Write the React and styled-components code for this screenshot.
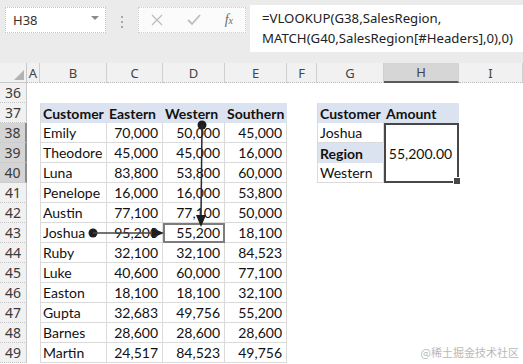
import React from 'react';
import styled, { createGlobalStyle } from 'styled-components';

const GlobalStyle = createGlobalStyle`
    html, body {
        margin: 0;
        padding: 0;
        background: #ffffff;
        overflow: hidden;
    }
`;

const Page = styled.div`
    position: relative;
    width: 523px;
    height: 364px;
    overflow: hidden;
    background: #ffffff;
    font-family: 'Lato', 'Liberation Sans', sans-serif;
`;

const TopBar = styled.div`
    display: flex;
    align-items: flex-start;
    height: 63px;
    background: #ebebeb;
    box-sizing: border-box;
    padding: 5px 0 0 5px;
`;

const NameBox = styled.div`
    display: flex;
    align-items: center;
    justify-content: space-between;
    width: 101px;
    height: 26px;
    margin-top: 2px;
    box-sizing: border-box;
    padding: 0 6px 0 7px;
    background: #ffffff;
    border: 1px dotted #c4c4c4;
    font-family: 'Noto Sans', sans-serif;
    font-size: 13px;
    color: #333;
`;

const DropArrow = styled.span`
    width: 0;
    height: 0;
    border-left: 4px solid transparent;
    border-right: 4px solid transparent;
    border-top: 4px solid #8a8a8a;
    margin-top: -4px;
`;

const Grip = styled.div`
    display: flex;
    flex-direction: column;
    gap: 3px;
    width: 32px;
    align-items: center;
    padding-top: 11px;
    & span {
        width: 2px;
        height: 2px;
        background: #a8a8a8;
    }
`;

const Buttons = styled.div`
    display: flex;
    align-items: center;
    justify-content: space-around;
    width: 108px;
    height: 26px;
    margin-top: 2px;
    box-sizing: border-box;
    background: #fbfbfb;
    border: 1px dotted #cfcfcf;
`;

const Fx = styled.span`
    font-family: 'Liberation Serif', serif;
    font-style: italic;
    font-size: 14px;
    color: #6a6a6a;
    & small {
        font-size: 10px;
    }
`;

const Formula = styled.div`
    flex: 1;
    height: 47px;
    margin-left: 4px;
    box-sizing: border-box;
    padding: 3px 0 0 12px;
    background: #ffffff;
    font-family: 'Noto Sans', sans-serif;
    font-size: 13.2px;
    line-height: 20px;
    color: #222;
    white-space: nowrap;
`;

const Sheet = styled.div`
    display: grid;
    grid-template-columns: 27px 13px 67px 56px 62px 62px 30px 67px 75px 64px;
    grid-auto-rows: 20px;
`;

const Corner = styled.div`
    position: relative;
    background: #f1f1f1;
    border-bottom: 1px solid #c8c8c8;
    border-right: 1px solid #c8c8c8;
    box-sizing: border-box;
    &::after {
        content: '';
        position: absolute;
        right: 2px;
        bottom: 2px;
        width: 0;
        height: 0;
        border-left: 10px solid transparent;
        border-bottom: 10px solid #b3b3b3;
    }
`;

const ColHead = styled.div`
    display: flex;
    align-items: center;
    justify-content: center;
    box-sizing: border-box;
    background: ${p => (p.$active ? '#d6d6d6' : '#f1f1f1')};
    border-right: 1px solid #d0d0d0;
    border-bottom: ${p => (p.$active ? '2px solid #5a5a5a' : '1px dotted #bdbdbd')};
    font-family: 'Noto Sans', sans-serif;
    font-size: 13px;
    color: #444;
`;

const RowHead = styled.div`
    display: flex;
    align-items: center;
    justify-content: center;
    box-sizing: border-box;
    background: ${p => (p.$active ? '#d4d4d4' : '#f1f1f1')};
    border-right: ${p => (p.$active ? '2px solid #8c8c8c' : '1px solid #c8c8c8')};
    border-bottom: 1px dotted #c4c4c4;
    font-family: 'Noto Sans', sans-serif;
    font-size: 14px;
    color: #3a3a3a;
`;

const Cell = styled.div`
    display: flex;
    align-items: center;
    justify-content: ${p => (p.$right ? 'flex-end' : p.$center ? 'center' : 'flex-start')};
    box-sizing: border-box;
    padding: 0 4px 0 2px;
    font-size: 14px;
    font-weight: ${p => (p.$bold ? 700 : 400)};
    color: #111;
    white-space: nowrap;
    overflow: visible;
    background: ${p => (p.$head ? '#dce3f0' : '#ffffff')};
    border-right: ${p => (p.$grid ? '1px solid #dadada' : 'none')};
    border-bottom: ${p => (p.$grid ? '1px solid #dadada' : 'none')};
    border-left: ${p => (p.$left ? '1px solid #dadada' : 'none')};
    ${p => p.$outline && 'outline: 2px solid #7d7d7d; outline-offset: -2px;'}
`;

const Merged = styled(Cell)`
    position: relative;
    grid-row: span 3;
    justify-content: center;
    border: 2px solid #474747;
    &::after {
        content: '';
        position: absolute;
        right: -4px;
        bottom: -4px;
        width: 6px;
        height: 6px;
        background: #474747;
        border: 1px solid #ffffff;
    }
`;

const Overlay = styled.svg`
    position: absolute;
    left: 0;
    top: 0;
    pointer-events: none;
`;

const Watermark = styled.div`
    position: absolute;
    right: 4px;
    bottom: 4px;
    font-family: 'Noto Sans CJK SC', sans-serif;
    font-size: 11px;
    color: #b9b9b9;
`;

const columns = ['A', 'B', 'C', 'D', 'E', 'F', 'G', 'H', 'I'];

const sales = [
    ['Emily', '70,000', '50,000', '45,000'],
    ['Theodore', '45,000', '45,000', '16,000'],
    ['Luna', '83,800', '53,800', '60,000'],
    ['Penelope', '16,000', '16,000', '53,800'],
    ['Austin', '77,100', '77,100', '50,000'],
    ['Joshua', '95,200', '55,200', '18,100'],
    ['Ruby', '32,100', '32,100', '84,523'],
    ['Luke', '40,600', '60,000', '77,100'],
    ['Easton', '18,100', '18,100', '32,100'],
    ['Gupta', '32,683', '49,756', '55,200'],
    ['Barnes', '28,600', '28,600', '28,600'],
    ['Martin', '24,517', '84,523', '49,756'],
];

const lookup = {
    37: { text: 'Customer', head: true, bold: true },
    38: { text: 'Joshua' },
    39: { text: 'Region', head: true, bold: true },
    40: { text: 'Western' },
};

const SalesCells = ({ row }) => {
    if (row === 37) {
        return ['Customer', 'Eastern', 'Western', 'Southern'].map((t, i) => (
            <Cell key={t} $head $bold $left={i === 0}>{t}</Cell>
        ));
    }
    const data = sales[row - 38];
    if (!data) {
        return [0, 1, 2, 3].map(i => <Cell key={i} />);
    }
    return data.map((t, i) => (
        <Cell key={i} $grid $left={i === 0} $right={i > 0} $outline={row === 43 && i === 2}>
            {t}
        </Cell>
    ));
};

const LookupCells = ({ row }) => {
    const g = lookup[row];
    if (!g) return [<Cell key="g" />, <Cell key="h" />];
    const gCell = (
        <Cell key="g" $head={g.head} $bold={g.bold} $grid={!g.head} $left>{g.text}</Cell>
    );
    if (row === 37) return [gCell, <Cell key="h" $head $bold>Amount</Cell>];
    if (row === 38) return [gCell, <Merged key="h">55,200.00</Merged>];
    return [gCell];
};

const SheetRow = ({ row }) => (
    <>
        <RowHead $active={row >= 38 && row <= 40}>{row}</RowHead>
        <Cell />
        <SalesCells row={row} />
        <Cell />
        <LookupCells row={row} />
        <Cell />
    </>
);

const rows = Array.from({ length: 14 }, (_, i) => 36 + i);

export default function App() {
    return (
        <Page>
            <GlobalStyle />
            <TopBar>
                <NameBox>
                    H38
                    <DropArrow />
                </NameBox>
                <Grip>
                    <span />
                    <span />
                    <span />
                </Grip>
                <Buttons>
                    <svg width="12" height="12" viewBox="0 0 12 12">
                        <path d="M1 1 L11 11 M11 1 L1 11" stroke="#bdbdbd" strokeWidth="1.3" />
                    </svg>
                    <svg width="14" height="12" viewBox="0 0 14 12">
                        <path d="M1 6 L5 10 L13 1" stroke="#bdbdbd" strokeWidth="1.8" fill="none" />
                    </svg>
                    <Fx>f<small>x</small></Fx>
                </Buttons>
                <Formula>
                    =VLOOKUP(G38,SalesRegion,
                    <br />
                    MATCH(G40,SalesRegion[#Headers],0),0)
                </Formula>
            </TopBar>
            <Sheet>
                <Corner />
                {columns.map(c => (
                    <ColHead key={c} $active={c === 'H'}>{c}</ColHead>
                ))}
                {rows.map(r => <SheetRow key={r} row={r} />)}
            </Sheet>
            <Overlay width="523" height="364">
                <circle cx="202" cy="125" r="4.5" fill="#1e1e1e" />
                <line x1="202" y1="125" x2="201" y2="216" stroke="#2a2a2a" strokeWidth="1.5" />
                <polygon points="196,215 206,215 201,227" fill="#1e1e1e" />
                <circle cx="93" cy="233" r="4.5" fill="#1e1e1e" />
                <line x1="93" y1="233" x2="153" y2="233" stroke="#444" strokeWidth="1.5" />
                <polygon points="152,228 152,238 164,233" fill="#1e1e1e" />
            </Overlay>
            <Watermark>@稀土掘金技术社区</Watermark>
        </Page>
    );
}
